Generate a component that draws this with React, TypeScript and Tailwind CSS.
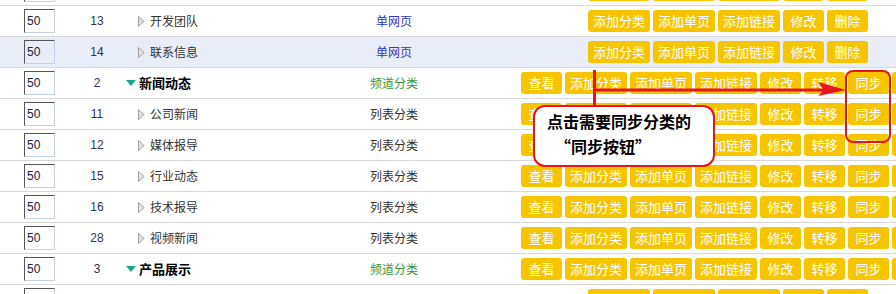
import React from "react";

type Row = {
  id: string;
  name: string;
  kind: "single" | "channel" | "list";
  cat?: boolean;
  hl?: boolean;
};

const rows: Row[] = [
  { id: "", name: "", kind: "single" },
  { id: "13", name: "开发团队", kind: "single" },
  { id: "14", name: "联系信息", kind: "single", hl: true },
  { id: "2", name: "新闻动态", kind: "channel", cat: true },
  { id: "11", name: "公司新闻", kind: "list" },
  { id: "12", name: "媒体报导", kind: "list" },
  { id: "15", name: "行业动态", kind: "list" },
  { id: "16", name: "技术报导", kind: "list" },
  { id: "28", name: "视频新闻", kind: "list" },
  { id: "3", name: "产品展示", kind: "channel", cat: true },
  { id: "", name: "", kind: "single" },
];

function Btn({ label }: { label: string }) {
  const wide = label.length === 4;
  return (
    <div
      className={`${wide ? "w-[62px]" : "w-[41px]"} h-[22px] shrink-0 rounded-[3px] bg-[#f7c500] text-white text-[13px] leading-[22px] text-center`}
    >
      {label}
    </div>
  );
}

function TypeLabel({ kind, show }: { kind: Row["kind"]; show: boolean }) {
  if (!show) return null;
  if (kind === "single") return <span className="text-[#3535c8]">单网页</span>;
  if (kind === "channel") return <span className="text-[#349944]">频道分类</span>;
  return <span className="text-[#333333]">列表分类</span>;
}

export default function App() {
  return (
    <div
      className="relative w-[896px] h-[294px] overflow-hidden bg-white"
      style={{ fontFamily: '"Liberation Sans", "Noto Sans CJK SC", sans-serif' }}
    >
      <div className="mt-[-25px] w-[1100px]">
        {rows.map((r, i) => (
          <div
            key={i}
            className={`flex items-center h-[31px] border-b border-[#d8d8d8] ${r.hl ? "bg-[#e8edf7]" : "bg-white"}`}
          >
            <div className="w-[72px] pl-[24px] shrink-0 flex items-center">
              <input
                readOnly
                value="50"
                className="w-[31px] h-[24px] bg-transparent border border-t-[#555555] border-l-[#555555] border-r-[#c3d1e6] border-b-[#c3d1e6] pl-[2px] text-[12px] text-[#202040] outline-none"
                style={{ fontFamily: '"Liberation Sans", sans-serif' }}
              />
            </div>
            <div className="w-[50px] shrink-0 text-center text-[12px] text-[#33334d]">{r.id}</div>
            <div
              className={`w-[212px] shrink-0 flex items-center ${r.cat ? "pl-[4px] gap-[3px]" : "pl-[16px] gap-[5px]"}`}
              style={{ fontFamily: '"Noto Sans CJK SC", sans-serif' }}
            >
              {r.name &&
                (r.cat ? (
                  <svg width="10" height="6" viewBox="0 0 10 6">
                    <polygon points="0,0 10,0 5,6" fill="#19a68a" />
                  </svg>
                ) : (
                  <svg width="7" height="11" viewBox="0 0 7 11">
                    <polygon points="0.5,0.5 6.2,5.5 0.5,10.5" fill="#e2e2e2" stroke="#a3a3a3" strokeWidth="1" />
                  </svg>
                ))}
              <span className={r.cat ? "text-[13px] font-bold text-black" : "text-[12px] text-[#333333]"}>
                {r.name}
              </span>
            </div>
            <div
              className="w-[120px] shrink-0 text-center text-[12px]"
              style={{ fontFamily: '"Noto Sans CJK SC", sans-serif' }}
            >
              <TypeLabel kind={r.kind} show={r.name !== ""} />
            </div>
            <div
              className={`flex gap-[3px] shrink-0 ${r.kind === "single" ? "pl-[134px]" : "pl-[67px]"}`}
              style={{ fontFamily: '"Noto Sans CJK SC", sans-serif' }}
            >
              {r.kind === "single" ? (
                <>
                  <Btn label="添加分类" />
                  <Btn label="添加单页" />
                  <Btn label="添加链接" />
                  <Btn label="修改" />
                  <Btn label="删除" />
                </>
              ) : (
                <>
                  <Btn label="查看" />
                  <Btn label="添加分类" />
                  <Btn label="添加单页" />
                  <Btn label="添加链接" />
                  <Btn label="修改" />
                  <Btn label="转移" />
                  <Btn label="同步" />
                  <Btn label="删除" />
                </>
              )}
            </div>
          </div>
        ))}
      </div>

      {/* annotation lines */}
      <svg className="absolute left-0 top-0 pointer-events-none" width="896" height="294" viewBox="0 0 896 294">
        <line x1="594.5" y1="70" x2="594.5" y2="106" stroke="#e8141b" strokeWidth="3" />
        <line x1="593" y1="90" x2="826" y2="90" stroke="#e8141b" strokeWidth="3" />
        <polygon points="846,90 818,82 824,90 818,96" fill="#e8141b" />
      </svg>

      {/* highlight around sync buttons */}
      <div className="absolute left-[845px] top-[70px] w-[46px] h-[73px] border-2 border-[#e8141b] rounded-[8px]" />

      {/* callout */}
      <div
        className="absolute left-[533px] top-[105px] w-[182px] h-[62px] border-2 border-[#e8141b] rounded-[12px] bg-white pl-[12px] pt-[2px] text-[16px] font-bold leading-[25px] text-black"
        style={{ fontFamily: '"Noto Sans CJK SC", sans-serif' }}
      >
        <div>点击需要同步分类的</div>
        <div className="pl-[8px]">“同步按钮”</div>
      </div>
    </div>
  );
}
